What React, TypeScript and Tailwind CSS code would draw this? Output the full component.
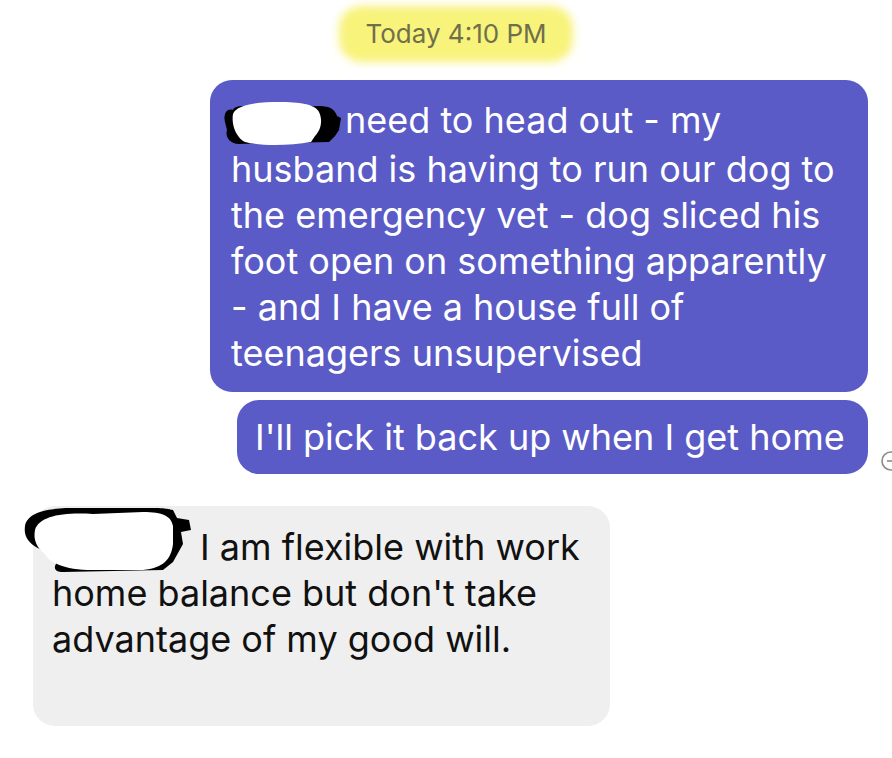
import React from 'react';

const font = { fontFamily: 'Inter, "Liberation Sans", sans-serif' };

function Redaction({ width, height, variant }: { width: number; height: number; variant: 'top' | 'bottom' }) {
  if (variant === 'top') {
    return (
      <svg width={width} height={height} viewBox="0 0 124 46" className="inline-block align-middle">
        <path d="M6 22 C4 14 8 8 14 10 C16 4 30 6 40 8 L100 6 C112 6 116 10 118 16 L122 18 L120 30 L116 36 L110 42 L20 44 C10 44 6 36 8 30 Z" fill="#000" />
        <path d="M14 14 C18 4 40 2 60 2 C80 2 96 4 100 12 C104 20 102 30 96 36 L92 42 C70 46 40 46 26 42 C18 38 12 26 14 14 Z" fill="#fff" />
      </svg>
    );
  }
  return (
    <svg width={width} height={height} viewBox="0 0 176 76" className="inline-block">
      <path d="M2 22 C4 10 20 4 50 4 L120 4 C140 4 140 4 150 6 L154 14 L166 16 L168 26 L158 28 L160 40 L150 58 L140 66 L40 68 C30 68 30 62 36 56 L30 50 C10 44 0 36 2 22 Z" fill="#000" />
      <path d="M12 26 C16 12 40 8 70 10 L120 8 C140 8 148 12 150 22 L150 40 C148 56 140 64 120 66 L70 66 C40 66 26 58 22 50 C14 44 10 36 12 26 Z" fill="#fff" />
    </svg>
  );
}

export default function App() {
  return (
    <div className="relative h-[758px] w-[892px] overflow-hidden bg-white" style={font}>
      <div className="flex justify-center pl-[20px] pt-[6px]">
        <div className="relative px-[26px] py-[12px]">
          <div className="absolute inset-0 rounded-[22px] bg-[#f8f37a] blur-[4px]" />
          <span className="relative text-[26px] leading-[32px] text-[#6f6f4c]">Today 4:10 PM</span>
        </div>
      </div>

      <div className="mt-[18px] flex justify-end pr-[24px]">
        <div className="w-[658px] rounded-[22px] bg-[#5a5bc6] px-[21px] pb-[16px] pt-[17px] text-[36px] leading-[46px] text-white">
          <span className="-ml-[12px] mr-[2px] inline-block">
            <Redaction width={124} height={46} variant="top" />
          </span>
          need to head out - my
          <br />
          husband is having to run our dog to
          <br />
          the emergency vet - dog sliced his
          <br />
          foot open on something apparently
          <br />
          - and I have a house full of
          <br />
          teenagers unsupervised
        </div>
      </div>

      <div className="relative mt-[8px] flex justify-end pr-[24px]">
        <div className="w-[631px] rounded-[22px] bg-[#5a5bc6] px-[18px] pb-[14px] pt-[14px] text-[36px] leading-[46px] text-white">
          I'll pick it back up when I get home
        </div>
        <svg width="22" height="22" viewBox="0 0 22 22" className="absolute left-[880px] top-[50px]">
          <circle cx="11" cy="11" r="9" fill="none" stroke="#8a8a8a" strokeWidth="1.6" />
          <path d="M7 11 L15 11" stroke="#8a8a8a" strokeWidth="1.6" />
        </svg>
      </div>

      <div className="mt-[32px] flex pl-[33px]">
        <div className="relative w-[577px] rounded-[22px] bg-[#efefef] pb-[64px] pl-[19px] pt-[18px] text-[36px] leading-[46px] text-[#111]">
          <span className="absolute left-[-10px] top-[-2px]">
            <Redaction width={176} height={76} variant="bottom" />
          </span>
          <span className="inline-block w-[148px]" />
          I am flexible with work
          <br />
          home balance but don't take
          <br />
          advantage of my good will.
        </div>
      </div>
    </div>
  );
}
